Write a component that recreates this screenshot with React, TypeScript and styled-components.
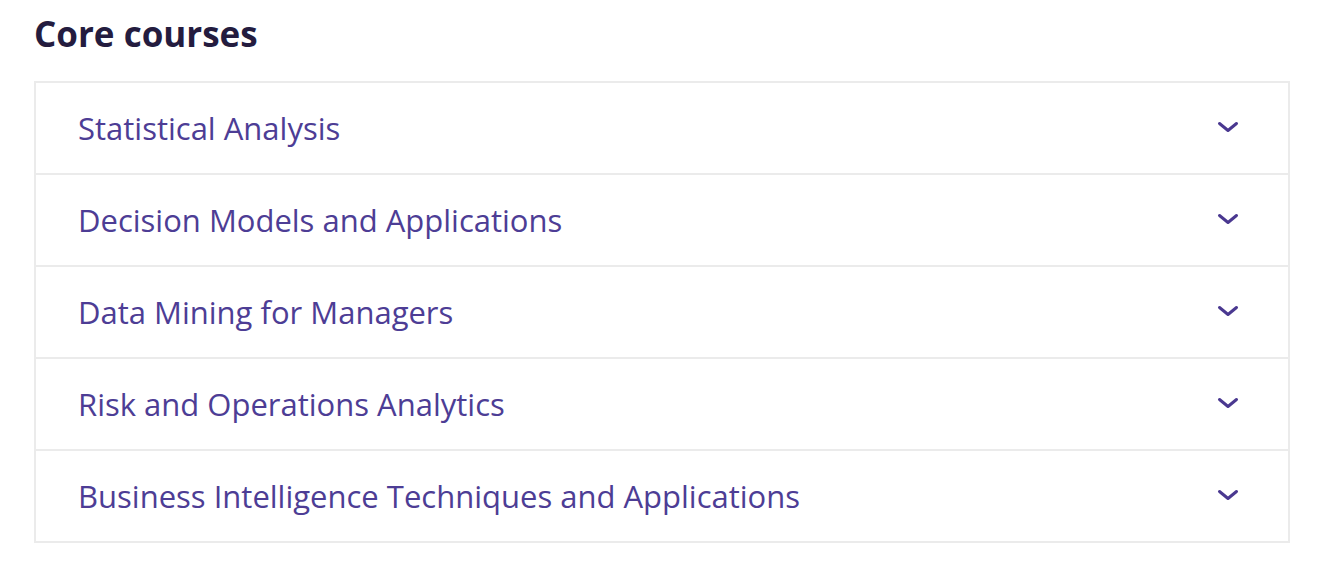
import React from "react";
import styled, { createGlobalStyle } from "styled-components";

const Global = createGlobalStyle`
  html, body { margin: 0; padding: 0; background: #ffffff; }
  body { font-family: "Open Sans", "Noto Sans", Arial, sans-serif; }
`;

const Page = styled.main`
  padding: 12px 45px 0 34px;
`;

const Heading = styled.h2`
  margin: 0 0 25px 0;
  font-family: "Open Sans", "Noto Sans", sans-serif;
  font-weight: 700;
  font-size: 35px;
  line-height: 44px;
  color: #241c3f;
`;

const Accordion = styled.section`
  display: flex;
  flex-direction: column;
  border: 2px solid #ebebeb;
  width: 1256px;
  box-sizing: border-box;
`;

const Row = styled.button<{ $first?: boolean }>`
  display: flex;
  align-items: center;
  justify-content: space-between;
  height: 90px;
  padding: 0 49px 0 42px;
  background: #ffffff;
  border: 0;
  border-top: ${(p) => (p.$first ? "0" : "2px solid #ebebeb")};
  box-sizing: content-box;
  cursor: pointer;
  text-align: left;
`;

const Title = styled.span`
  font-family: "Open Sans", "Noto Sans", sans-serif;
  font-size: 31px;
  font-weight: 400;
  color: #4d3d95;
`;

const ChevronIcon = styled.svg`
  display: block;
  margin-top: -3px;
`;

const Chevron = () => (
  <ChevronIcon width="22" height="14" viewBox="0 0 22 14" aria-hidden="true">
    <path d="M2.5 3.5 L11 10.5 L19.5 3.5" fill="none" stroke="#4a3890" strokeWidth="3" strokeLinecap="round" strokeLinejoin="round" />
  </ChevronIcon>
);

const courses = [
  "Statistical Analysis",
  "Decision Models and Applications",
  "Data Mining for Managers",
  "Risk and Operations Analytics",
  "Business Intelligence Techniques and Applications",
];

export default function App() {
  return (
    <>
      <Global />
      <Page>
        <Heading>Core courses</Heading>
        <Accordion>
          {courses.map((c, i) => (
            <Row key={c} $first={i === 0}>
              <Title>{c}</Title>
              <Chevron />
            </Row>
          ))}
        </Accordion>
      </Page>
    </>
  );
}
